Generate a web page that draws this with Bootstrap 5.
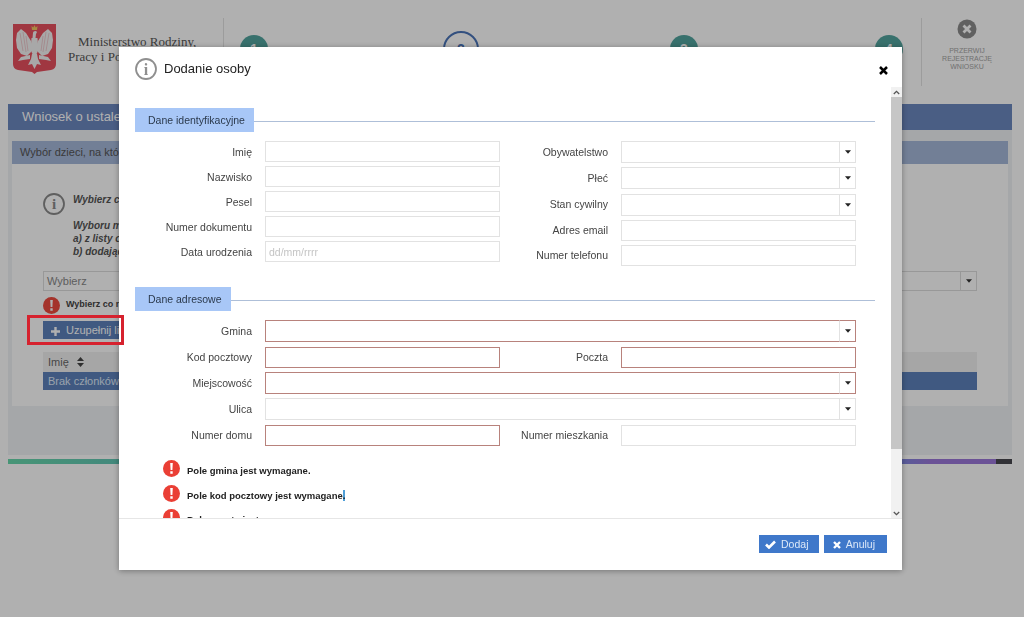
<!doctype html>
<html lang="pl">
<head>
  <meta charset="utf-8">
  <title>Dodanie osoby</title>
  <link href="https://cdn.jsdelivr.net/npm/bootstrap@5.3.3/dist/css/bootstrap.min.css" rel="stylesheet">
  <style>
    html, body { height: 100%; overflow: hidden; }
    body { font-family: "Liberation Sans", Arial, sans-serif; font-size: 10.5px; color: #333; background: #fff; }

    /* strona pod oknem */
    .page-head { height: 100px; }
    .crest { width: 43px; height: 51px; margin: 23px 0 0 13px; }
    .ministry { width: 167px; padding: 34px 0 0 12px; font-family: "Liberation Serif", serif; font-size: 13px; line-height: 15px; color: #555; white-space: nowrap; }
    .ministry-top { padding-left: 10px; }
    .head-sep { width: 1px; height: 68px; margin-top: 18px; background: #e2e2e2; }
    .steps { width: 697px; padding: 35px 0 0 16px; }
    .step-dot { width: 28px; height: 28px; border-radius: 50%; background: #52a49e; color: #fff; font-size: 14px; font-weight: 700; line-height: 28px; text-align: center; }
    .step-dot + .step-dot { margin-left: 177px; }
    .step-now { width: 36px; height: 36px; margin-top: -4px; margin-left: 175px !important; background: #fff; border: 2px solid #4a74b8; color: #4a74b8; line-height: 32px; }
    .step-dot.step-now + .step-dot { margin-left: 191px; }
    .stop-box { width: 90px; padding-top: 19px; text-align: center; font-size: 7px; line-height: 8px; color: #a4a4a4; text-transform: uppercase; }
    .stop-box svg { display: block; margin: 0 auto 8px; }

    .main-panel { margin: 4px 12px 0 8px; background: #f0f2f5; }
    .main-title { height: 26px; padding-left: 14px; background: #6c88c0; color: #fff; font-size: 13px; line-height: 26px; }
    .main-inner { padding: 11px 4px 49px; }
    .sub-title { height: 23px; padding-left: 8px; background: #a5b8da; font-size: 11px; line-height: 23px; color: #555; }
    .choice-box { height: 242px; padding: 0 31px; background: #fff; }
    .hint { padding: 29px 0 0 0; font-size: 10px; line-height: 13px; font-weight: 700; font-style: italic; color: #555; }
    .hint svg { margin: 0 8px 0 0; flex: none; }
    .hint-gap { height: 13px; }
    .pick-line { height: 20px; margin-top: 13px; border: 1px solid #ddd; color: #888; font-size: 11px; line-height: 18px; padding-left: 3px; }
    .pick-caret { width: 16px; border-left: 1px solid #ddd; }
    .pick-fault { margin-top: 5px; height: 18px; gap: 6px; font-size: 9px; font-weight: 700; color: #444; }
    .fill-btn { height: 18px; margin-top: 7px; width: 120px; padding: 0 8px; border: 0; border-radius: 0; background: #5d82bc; color: #fff; font-size: 11px; line-height: 18px; text-align: left; }
    .fill-btn svg { margin-right: 6px; }
    .red-frame { position: absolute; z-index: 1060; left: 27px; top: 315px; width: 97px; height: 30px; border: 3px solid #d6222e; }
    .people { margin-top: 13px; font-size: 11px; }
    .people-head { height: 20px; padding-left: 5px; background: #f1f1f1; line-height: 20px; color: #666; }
    .people-row { height: 18px; padding-left: 5px; background: #5d82bc; line-height: 18px; color: #dfe9f8; }
    .rainbow { height: 5px; margin: 4px 12px 0 8px; background: linear-gradient(to right, #68d8ac 0, #60c0b8 15%, #778be0 88%, #9c77d9 92%, #9c77d9 98.4%, #48484f 98.4%); }

    .modal-backdrop { --bs-backdrop-opacity: .31; --bs-backdrop-bg: #000; }

    /* okno */
    .modal-dialog { max-width: 783px; margin: 47px 0 0 119px; }
    .modal-content { height: 523px; border: 0; border-radius: 0; box-shadow: 0 1px 6px rgba(0,0,0,.35); color: #333; }
    .modal-header { height: 40px; padding: 4px 14px 0 16px; border: 0; }
    .title-row { gap: 7px; }
    .modal-title { font-size: 13px; line-height: 22px; color: #222; }
    .shut-x { padding: 2px 0 0; }
    .modal-body { min-height: 0; }
    .form-pane { padding: 21px 16px 0; overflow: hidden; }
    .scroll-rail { width: 11px; background: #f1f1f1; }
    .scroll-end { height: 10px; }
    .scroll-thumb { height: 352px; background: #c6c6c6; }
    .modal-footer { height: 52px; padding: 0 15px 1px 0; gap: 5px; border-top: 1px solid #e6e6e6; }
    .act-btn { height: 18px; padding: 0 11px 0 6px; border: 0; border-radius: 0; background: #3f78ca; color: #dce8f8; font-size: 10.5px; line-height: 18px; margin: 0; }
    .act-btn:last-child { padding: 0 12px 0 9px; }
    .act-btn svg { margin: -1px 2px 0 0; vertical-align: middle; }

    .sect-head { height: 24px; }
    .sect-label { height: 24px; padding: 0 9px 0 13px; background: #a8c7f7; line-height: 24px; font-size: 10.5px; color: #2b3a4d; white-space: nowrap; }
    .sect-line { height: 1px; margin-top: 2px; background: #aebfd8; }
    .form-cols { padding-top: 9px; height: 155px; }
    .form-left { width: 365px; }
    .form-right { width: 356px; }
    .field-row { margin-bottom: 4px; }
    .field-row label { width: 117px; margin-right: 13px; padding-top: 1px; text-align: right; color: #444; white-space: nowrap; }
    .form-left .field-row label { padding-top: 3px; }
    .form-right .field-row label, .field-row label.side-label { width: 108px; }
    .form-control { height: 21px; min-height: 0; padding: 0 3px; border: 1px solid #e2e2e2; border-radius: 0; font-size: 10.5px; box-shadow: none; }
    .form-control::placeholder { color: #c4c4c4; }
    .narrow-input { flex: none; width: 235px; }
    .wide-input { flex: none; width: 591px; }
    .input-group > .form-control { height: 22px; border-radius: 0; }
    .input-group-text { width: 17px; height: 22px; padding: 0; justify-content: center; background: #fff; border: 1px solid #e2e2e2; border-radius: 0; }
    .combo-tall { margin-bottom: 4.300px; }
    .must-fill .form-control, .must-fill .input-group-text, .form-control.must-fill { border-color: #b8827c; }
    .must-fill .form-control { border-right-color: #e2e2e2; }
    .must-fill .input-group-text { border-left-color: #e2e2e2; }
    .addr-rows { padding-top: 9px; height: 149px; }
    .addr-rows .field-row { margin-bottom: 4px; height: 22px; }
    .fault-list { padding-left: 28px; font-size: 9.500px; font-weight: 700; color: #222; }
    .fault-item { height: 24.500px; }
    .fault-item svg { margin-right: 7px; flex: none; }
    .sel-mark { background: #4f9fd8; color: #111; }
  </style>
</head>
<body>
  <header class="page-head d-flex">
    <svg class="crest" viewBox="0 0 43 51">
      <path d="M0 1h43v40q0 5-5 6l-14 2-2.500 2-2.500-2-14-2q-5-1-5-6z" fill="#e8505f"/>
      <g fill="#f4f4f4">
        <path d="M20 10c0-2 3-3 4-1l-1 2-.5 4h-3z"/>
        <path d="M18.500 15h6l1 12-2 4h-4l-2-4z"/>
        <path d="M18 18L13 10 8 6 4 10 3 17l1 8 4 6 6 2 4-4z"/>
        <path d="M25 18l5-8 5-4 4 4 1 7-1 8-4 6-6 2-4-4z"/>
        <path d="M19 31h5l1 5 3 6-4-1-2.500 5-2.500-5-4 1 3-6z"/>
        <path d="M17 32l-9 2-3 4 5-1 7-1zM26 32l9 2 3 4-5-1-7-1z"/>
      </g>
      <g stroke="#e8a0a8" stroke-width=".5" fill="none">
        <path d="M7 10l3 18M10 9l3 20M13 13l2 15M36 10l-3 18M33 9l-3 20M30 13l-2 15"/>
      </g>
      <path d="M19 7l-.5-4 1.800 1.500L21.500 2l1.200 2.500L24.500 3 24 7z" fill="#f4c860"/>
    </svg>
    <div class="ministry"><span class="ministry-top">Ministerstwo Rodziny,</span><br>Pracy i Polityki Społecznej</div>
    <div class="head-sep"></div>
    <div class="steps d-flex align-items-start">
      <div class="step-dot">1</div>
      <div class="step-dot step-now">2</div>
      <div class="step-dot">3</div>
      <div class="step-dot">4</div>
    </div>
    <div class="head-sep"></div>
    <div class="stop-box">
      <svg width="20" height="20" viewBox="0 0 20 20"><circle cx="10" cy="10" r="9.500" fill="#8b8b8b"/><path d="M6.500 6.500l7 7m0-7l-7 7" stroke="#fff" stroke-width="2.800"/></svg>
      Przerwij<br>rejestrację<br>wniosku
    </div>
  </header>

  <section class="main-panel">
    <div class="main-title">Wniosek o ustalenie prawa</div>
    <div class="main-inner">
      <div class="sub-title">Wybór dzieci, na których</div>
      <div class="choice-box">
        <div class="hint d-flex">
          <svg width="22" height="22" viewBox="0 0 22 22"><circle cx="11" cy="11" r="10" fill="none" stroke="#8a8a8a" stroke-width="1.800"/><text x="11" y="16" text-anchor="middle" font-family="Liberation Serif" font-size="15" font-weight="700" font-style="normal" fill="#8a8a8a">i</text></svg>
          <div>Wybierz członków rodziny<div class="hint-gap"></div>Wyboru można dokonać<br>a) z listy osób<br>b) dodając nową osobę</div>
        </div>
        <div class="pick-line d-flex justify-content-between">Wybierz<span class="pick-caret d-flex align-items-center justify-content-center"><svg width="6" height="4" viewBox="0 0 7 4"><path d="M0 0h7L3.500 4z" fill="#333"/></svg></span></div>
        <div class="pick-fault d-flex align-items-center">
          <svg width="17" height="17" viewBox="0 0 17 17"><circle cx="8.500" cy="8.500" r="8.500" fill="#ee4a3f"/><path d="M7.200 3h2.600l-.4 7H7.600zM7.300 11.300h2.400v2.400H7.300z" fill="#fff"/></svg>
          Wybierz co najmniej
        </div>
        <button class="btn fill-btn" type="button"><svg width="9" height="9" viewBox="0 0 9 9"><path d="M3.300 0h2.400v3.300H9v2.400H5.700V9H3.300V5.700H0V3.300h3.300z" fill="#fff"/></svg>Uzupełnij listę</button>
        <div class="people">
          <div class="people-head d-flex align-items-center gap-2">Imię <svg width="7" height="10" viewBox="0 0 7 10"><path d="M3.500 0L7 4H0zM3.500 10L0 6h7z" fill="#444"/></svg></div>
          <div class="people-row">Brak członków rodziny</div>
        </div>
      </div>
    </div>
  </section>
  <div class="rainbow"></div>

  <div class="modal-backdrop show"></div>
  <div class="modal d-block" tabindex="-1">
    <div class="modal-dialog">
      <div class="modal-content">
        <div class="modal-header justify-content-between">
          <div class="title-row d-flex align-items-center">
            <svg width="22" height="22" viewBox="0 0 22 22"><circle cx="11" cy="11" r="10" fill="none" stroke="#8f8f8f" stroke-width="1.800"/><text x="11" y="16.500" text-anchor="middle" font-family="Liberation Serif" font-size="16" font-weight="700" fill="#8f8f8f">i</text></svg>
            <h5 class="modal-title">Dodanie osoby</h5>
          </div>
          <div class="shut-x"><svg width="9" height="9" viewBox="0 0 9 9"><path d="M1 1l7 7m0-7L1 8" stroke="#000" stroke-width="2.500"/></svg></div>
        </div>
        <div class="modal-body d-flex p-0">
          <div class="form-pane flex-grow-1">
            <div class="sect-head d-flex align-items-center">
              <div class="sect-label">Dane identyfikacyjne</div>
              <div class="sect-line flex-grow-1"></div>
            </div>
            <div class="form-cols d-flex">
              <div class="form-left">
                <div class="field-row d-flex align-items-center"><label>Imię</label><input class="form-control narrow-input"></div>
                <div class="field-row d-flex align-items-center"><label>Nazwisko</label><input class="form-control narrow-input"></div>
                <div class="field-row d-flex align-items-center"><label>Pesel</label><input class="form-control narrow-input"></div>
                <div class="field-row d-flex align-items-center"><label>Numer dokumentu</label><input class="form-control narrow-input"></div>
                <div class="field-row d-flex align-items-center"><label>Data urodzenia</label><input class="form-control narrow-input" placeholder="dd/mm/rrrr"></div>
              </div>
              <div class="form-right">
                <div class="field-row combo-tall d-flex align-items-center"><label>Obywatelstwo</label><div class="input-group narrow-input"><input class="form-control"><span class="input-group-text"><svg width="6" height="4" viewBox="0 0 7 4"><path d="M0 0h7L3.500 4z" fill="#222"/></svg></span></div></div>
                <div class="field-row combo-tall d-flex align-items-center"><label>Płeć</label><div class="input-group narrow-input"><input class="form-control"><span class="input-group-text"><svg width="6" height="4" viewBox="0 0 7 4"><path d="M0 0h7L3.500 4z" fill="#222"/></svg></span></div></div>
                <div class="field-row combo-tall d-flex align-items-center"><label>Stan cywilny</label><div class="input-group narrow-input"><input class="form-control"><span class="input-group-text"><svg width="6" height="4" viewBox="0 0 7 4"><path d="M0 0h7L3.500 4z" fill="#222"/></svg></span></div></div>
                <div class="field-row d-flex align-items-center"><label>Adres email</label><input class="form-control narrow-input"></div>
                <div class="field-row d-flex align-items-center"><label>Numer telefonu</label><input class="form-control narrow-input"></div>
              </div>
            </div>

            <div class="sect-head d-flex align-items-center">
              <div class="sect-label">Dane adresowe</div>
              <div class="sect-line flex-grow-1"></div>
            </div>
            <div class="addr-rows">
              <div class="field-row d-flex align-items-center"><label>Gmina</label><div class="input-group wide-input must-fill"><input class="form-control"><span class="input-group-text"><svg width="6" height="4" viewBox="0 0 7 4"><path d="M0 0h7L3.500 4z" fill="#222"/></svg></span></div></div>
              <div class="field-row d-flex align-items-center"><label>Kod pocztowy</label><input class="form-control narrow-input must-fill"><label class="side-label">Poczta</label><input class="form-control narrow-input must-fill"></div>
              <div class="field-row d-flex align-items-center"><label>Miejscowość</label><div class="input-group wide-input must-fill"><input class="form-control"><span class="input-group-text"><svg width="6" height="4" viewBox="0 0 7 4"><path d="M0 0h7L3.500 4z" fill="#222"/></svg></span></div></div>
              <div class="field-row d-flex align-items-center"><label>Ulica</label><div class="input-group wide-input"><input class="form-control"><span class="input-group-text"><svg width="6" height="4" viewBox="0 0 7 4"><path d="M0 0h7L3.500 4z" fill="#222"/></svg></span></div></div>
              <div class="field-row d-flex align-items-center"><label>Numer domu</label><input class="form-control narrow-input must-fill"><label class="side-label">Numer mieszkania</label><input class="form-control narrow-input"></div>
            </div>

            <div class="fault-list">
              <div class="fault-item d-flex align-items-start"><svg width="17" height="17" viewBox="0 0 17 17"><circle cx="8.500" cy="8.500" r="8.500" fill="#ea3f35"/><path d="M7.200 3h2.600l-.4 7H7.600zM7.300 11.300h2.400v2.400H7.300z" fill="#fff"/></svg><span class="pt-1">Pole gmina jest wymagane.</span></div>
              <div class="fault-item d-flex align-items-start"><svg width="17" height="17" viewBox="0 0 17 17"><circle cx="8.500" cy="8.500" r="8.500" fill="#ea3f35"/><path d="M7.200 3h2.600l-.4 7H7.600zM7.300 11.300h2.400v2.400H7.300z" fill="#fff"/></svg><span class="pt-1">Pole kod pocztowy jest wymagane<span class="sel-mark">.</span></span></div>
              <div class="fault-item d-flex align-items-start"><svg width="17" height="17" viewBox="0 0 17 17"><circle cx="8.500" cy="8.500" r="8.500" fill="#ea3f35"/><path d="M7.200 3h2.600l-.4 7H7.600zM7.300 11.300h2.400v2.400H7.300z" fill="#fff"/></svg><span class="pt-1">Pole poczta jest wymagane.</span></div>
            </div>
          </div>
          <div class="scroll-rail d-flex flex-column flex-shrink-0">
            <div class="scroll-end d-flex align-items-center justify-content-center"><svg width="7" height="5" viewBox="0 0 7 5"><path d="M.8 4l2.700-2.700L6.200 4" fill="none" stroke="#555" stroke-width="1.300"/></svg></div>
            <div class="scroll-thumb"></div>
            <div class="flex-grow-1"></div>
            <div class="scroll-end d-flex align-items-center justify-content-center"><svg width="7" height="5" viewBox="0 0 7 5"><path d="M.8 1l2.700 2.700L6.200 1" fill="none" stroke="#555" stroke-width="1.300"/></svg></div>
          </div>
        </div>
        <div class="modal-footer">
          <button class="btn act-btn" type="button"><svg width="11" height="9" viewBox="0 0 11 9"><path d="M1 4.500l3 3L10 1.500" fill="none" stroke="#fff" stroke-width="2.600"/></svg> Dodaj</button>
          <button class="btn act-btn" type="button"><svg width="8" height="8" viewBox="0 0 8 8"><path d="M1 1l6 6m0-6L1 7" stroke="#fff" stroke-width="2.400"/></svg> Anuluj</button>
        </div>
      </div>
    </div>
  </div>
  <div class="red-frame"></div>
  <script src="https://cdn.jsdelivr.net/npm/bootstrap@5.3.3/dist/js/bootstrap.bundle.min.js"></script>
</body>
</html>
